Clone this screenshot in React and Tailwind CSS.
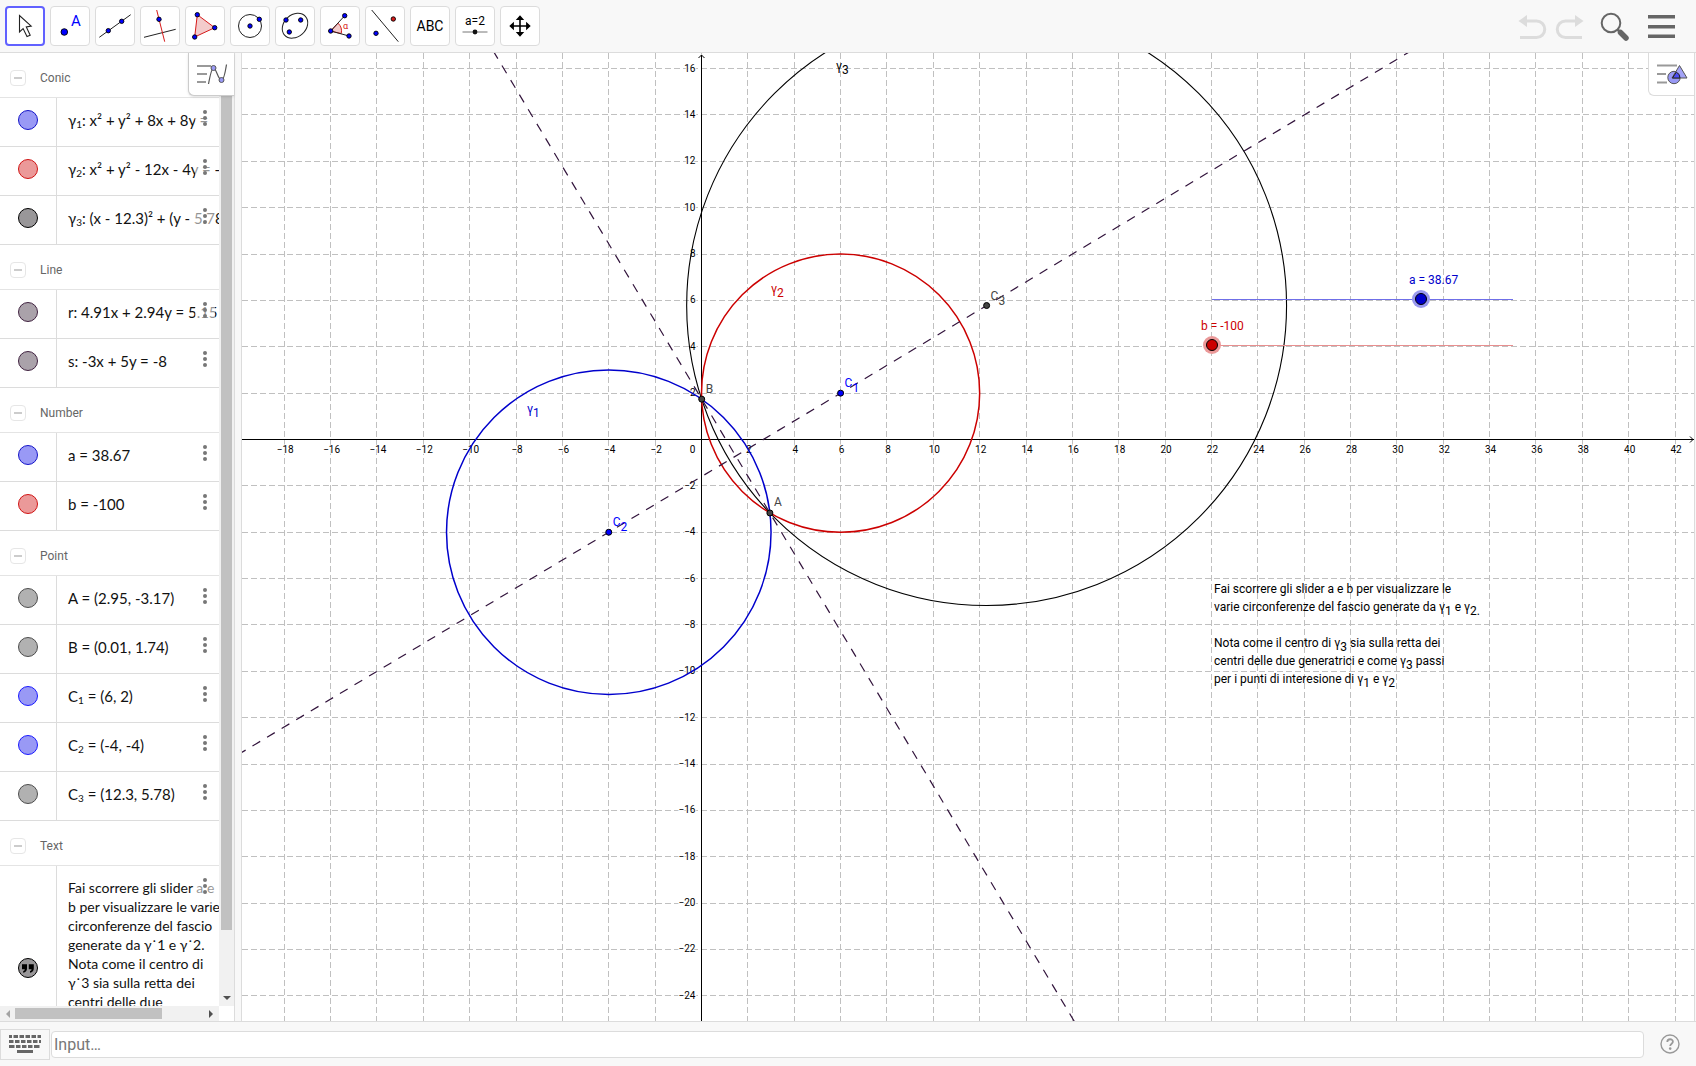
import React, { useState } from "react";

// ===== PLOT SCALE =====
const UNIT = 23.18;
const ORIGIN_X = 459.5;
const ORIGIN_Y = 386.5;

const px = (x) => ORIGIN_X + x * UNIT;
const py = (y) => ORIGIN_Y - y * UNIT;
const snap = (v) => Math.floor(v) + 0.5;

const range = (from, to, step) => {
  const out = [];
  for (let i = from; i <= to; i += step) out.push(i);
  return out;
};

const label = (n) => (n < 0 ? `−${-n}` : `${n}`);

// ===== ALGEBRA LIST =====
const BLUE = { fill: "#9999f5", stroke: "#1414c8" };
const BRIGHT = { fill: "#9999f5", stroke: "#1a1aff" };
const RED = { fill: "#eb9999", stroke: "#d01414" };
const BLACK = { fill: "#999799", stroke: "#000000" };
const PLUM = { fill: "#aaa2aa", stroke: "#412341" };
const GRAY = { fill: "#b1b1b1", stroke: "#4d4d4d" };

const groups = [
  {
    title: "Conic",
    rows: [
      { name: "γ", sub: "1", text: ": x² + y² + 8x + 8y =", color: BLUE },
      { name: "γ", sub: "2", text: ": x² + y² - 12x - 4y = -4", color: RED },
      { name: "γ", sub: "3", text: ": (x - 12.3)² + (y - 5.78)²", color: BLACK },
    ],
  },
  {
    title: "Line",
    rows: [
      { name: "r", text: ": 4.91x + 2.94y = 5.15", color: PLUM },
      { name: "s", text: ": -3x + 5y = -8", color: PLUM },
    ],
  },
  {
    title: "Number",
    rows: [
      { name: "a", text: " = 38.67", color: BLUE },
      { name: "b", text: " = -100", color: RED },
    ],
  },
  {
    title: "Point",
    rows: [
      { name: "A", text: " = (2.95, -3.17)", color: GRAY },
      { name: "B", text: " = (0.01, 1.74)", color: GRAY },
      { name: "C", sub: "1", text: " = (6, 2)", color: BRIGHT },
      { name: "C", sub: "2", text: " = (-4, -4)", color: BRIGHT },
      { name: "C", sub: "3", text: " = (12.3, 5.78)", color: GRAY },
    ],
  },
];

const noteLines = [
  "Fai scorrere gli slider a e",
  "b per visualizzare le varie",
  "circonferenze del fascio",
  "generate da γ˙1 e γ˙2.",
  "Nota come il centro di",
  "γ˙3 sia sulla retta dei",
  "centri delle due",
  "generatrici e come γ˙3",
  "passi per i punti di",
];

// ===== TOOL ICONS =====
const Dot = ({ x, y, r = 2.2, fill = "#0000ff" }) => (
  <circle cx={x} cy={y} r={r} fill={fill} stroke="#000" strokeWidth="0.9" />
);

const Icon = ({ children }) => (
  <svg viewBox="0 0 40 40" className="size-10 shrink-0" fill="none" stroke="#222" strokeWidth="1">
    {children}
  </svg>
);

const tools = [
  {
    name: "Move",
    icon: (
      <Icon>
        <path d="M14.5 9.5V26l3.6-3.4L22 30.5l3.2-1.3-3.9-8.2 4.9-.9z" fill="#fff" strokeWidth="1.1" />
      </Icon>
    ),
  },
  {
    name: "Point",
    icon: (
      <Icon>
        <Dot x={14.3} y={26} r={3.3} />
        <text x="21" y="20" fontSize="15" fill="#0000ff" stroke="none">
          A
        </text>
      </Icon>
    ),
  },
  {
    name: "Line",
    icon: (
      <Icon>
        <path d="M4.3 31.3 35.7 8.7" />
        <Dot x={13.3} y={24.7} />
        <Dot x={26.7} y={15.3} />
      </Icon>
    ),
  },
  {
    name: "Perpendicular Line",
    icon: (
      <Icon>
        <path d="M4 31.3 35.7 23.3" />
        <path d="M16.7 4 24.7 35.7" stroke="#d61a1a" />
        <Dot x={19} y={13.3} />
      </Icon>
    ),
  },
  {
    name: "Polygon",
    icon: (
      <Icon>
        <path d="M12.3 8.7 29.7 21.7 9.7 31z" fill="#f3cccc" stroke="#d61a1a" />
        <Dot x={12.3} y={8.7} />
        <Dot x={29.7} y={21.7} />
        <Dot x={9.7} y={31} />
      </Icon>
    ),
  },
  {
    name: "Circle with Center",
    icon: (
      <Icon>
        <circle cx="20" cy="20" r="11.5" />
        <Dot x={20} y={20} />
        <Dot x={29.3} y={13.3} />
      </Icon>
    ),
  },
  {
    name: "Conic",
    icon: (
      <Icon>
        <ellipse cx="20" cy="19.7" rx="14" ry="11" transform="rotate(-42 20 19.7)" />
        <Dot x={11} y={14} />
        <Dot x={25.7} y={14} />
        <Dot x={14.3} y={26} />
      </Icon>
    ),
  },
  {
    name: "Angle",
    icon: (
      <Icon>
        <path d="M10.7 25 18 17.2a10.8 10.8 0 0 1 3.2 10.4z" fill="#f3cccc" stroke="#d61a1a" />
        <path d="M24.7 9.7 10.7 25 29 30" />
        <text x="23" y="23" fontSize="9" fill="#d61a1a" stroke="none">
          α
        </text>
        <Dot x={10.7} y={25} />
        <Dot x={24.7} y={9.7} />
        <Dot x={29} y={30} />
      </Icon>
    ),
  },
  {
    name: "Reflect",
    icon: (
      <Icon>
        <path d="M6.7 4 33.3 35.7" />
        <Dot x={11} y={27.3} />
        <Dot x={28.3} y={13} fill="#d61a1a" />
      </Icon>
    ),
  },
  { name: "Text", icon: <span className="text-sm leading-none">ABC</span> },
  {
    name: "Slider",
    icon: (
      <Icon>
        <text x="20" y="19" fontSize="12" fill="#000" stroke="none" textAnchor="middle">
          a=2
        </text>
        <path d="M7.500 26H32.500" stroke="#777" />
        <circle cx="20" cy="26" r="2.4" fill="#111" stroke="none" />
      </Icon>
    ),
  },
  {
    name: "Move Graphics View",
    icon: (
      <Icon>
        <path d="M20 12V28M12 20H28" stroke="#000" strokeWidth="1.6" />
        <path
          d="M20 9.3l4.2 4.6h-8.4zM20 30.7l4.2-4.6h-8.4zM9.3 20l4.6-4.2v8.4zM30.7 20l-4.6-4.2v8.4z"
          fill="#000"
          stroke="none"
        />
      </Icon>
    ),
  },
];

const Toolbar = ({ tool, setTool }) => (
  <header className="flex h-[53px] shrink-0 items-start justify-between border-b border-[#dcdcdc] bg-[#f8f8f8] pl-[5px] pr-5">
    <div className="flex gap-[5px] pt-[6px]">
      {tools.map((t) => (
        <button
          key={t.name}
          aria-label={t.name}
          onClick={() => setTool(t.name)}
          className={
            tool === t.name
              ? "flex size-10 items-center justify-center rounded border-2 border-[#6161ff] bg-white"
              : "flex size-10 items-center justify-center rounded border border-[#dcdcdc] bg-white"
          }
        >
          {t.icon}
        </button>
      ))}
    </div>
    <div className="flex items-start gap-2 pt-3">
      <button aria-label="Undo">
        <svg width="29" height="28" viewBox="0 0 29 28" fill="none" stroke="#dcdcdc" strokeWidth="3">
          <path d="M8 9h10.500a8.200 8.200 0 0 1 0 16.500H2" />
          <path d="M0.500 9l8.500-6v12z" fill="#dcdcdc" stroke="none" />
        </svg>
      </button>
      <button aria-label="Redo">
        <svg width="29" height="28" viewBox="0 0 29 28" fill="none" stroke="#dcdcdc" strokeWidth="3">
          <path d="M21 9H10.500a8.200 8.200 0 0 0 0 16.500H27" />
          <path d="M28.500 9l-8.500-6v12z" fill="#dcdcdc" stroke="none" />
        </svg>
      </button>
      <button aria-label="Search" className="ml-2">
        <svg width="30" height="30" viewBox="0 0 30 30" fill="none" stroke="#666">
          <circle cx="11" cy="11" r="9.300" strokeWidth="2" />
          <path d="M17.500 17.500l3 3" strokeWidth="2.500" />
          <path d="M20.500 20.500l5.500 5.500" strokeWidth="5.500" strokeLinecap="round" />
        </svg>
      </button>
      <button aria-label="Menu" className="ml-[10px]">
        <svg width="28" height="30" viewBox="0 0 28 30" fill="#666">
          <path d="M0 3h27v3.500H0zM0 13h27v3.500H0zM0 22.500h27V26H0z" />
        </svg>
      </button>
    </div>
  </header>
);

const Marker = ({ color, quote }) => (
  <button aria-label="Show or hide" className="flex w-14 shrink-0 items-center justify-center">
    <svg width="22" height="22" viewBox="0 0 22 22">
      <circle cx="11" cy="11" r="9.500" fill={color.fill} stroke={color.stroke} strokeWidth="1" />
      {quote && (
        <path
          d="M5 7.200h5v4.300c0 2.200-1.300 3.800-3.800 4.300v-1.700c1-.3 1.500-.9 1.500-1.900H5zM11.800 7.200h5v4.300c0 2.200-1.300 3.800-3.800 4.300v-1.700c1-.3 1.500-.9 1.500-1.900h-2.700z"
          fill="#000"
        />
      )}
    </svg>
  </button>
);

const MoreButton = () => (
  <button
    aria-label="More"
    className="absolute right-1 top-[6px] flex h-8 w-5 items-center justify-center bg-white/55"
  >
    <svg width="4" height="16" viewBox="0 0 4 16" fill="#777" className="mb-1">
      <circle cx="2" cy="2" r="2" />
      <circle cx="2" cy="8" r="2" />
      <circle cx="2" cy="14" r="2" />
    </svg>
  </button>
);

const GroupHeader = ({ title }) => (
  <div className="flex h-[45px] items-center gap-3 border-b border-[#e4e4e4] pl-[10px] pt-[6px]">
    <button
      aria-label={`Collapse ${title}`}
      className="flex size-4 items-center justify-center rounded border border-[#e6e6e6]"
    >
      <span className="h-[2px] w-2 bg-[#cccccc]" />
    </button>
    <h2 className="pl-[2px] text-xs text-[#666666]">{title}</h2>
  </div>
);

const AlgebraView = () => (
  <aside className="relative flex w-[235px] shrink-0 flex-col border-r border-[#dcdcdc] bg-white">
    <div className="flex min-h-0 flex-1">
      <div className="min-w-0 flex-1 overflow-hidden">
        {groups.map((g) => (
          <section key={g.title}>
            <GroupHeader title={g.title} />
            {g.rows.map((r) => (
              <div key={r.name + r.sub} className="relative flex h-[49px] border-b border-[#dcdcdc]">
                <div className="flex pb-1">
                  <Marker color={r.color} />
                </div>
                <div className="flex min-w-0 flex-1 items-center overflow-hidden border-l border-[#dcdcdc] pb-1 pl-[11px] font-[Lato,'Noto_Sans',sans-serif] text-[15px] text-[#111111]">
                  <p className="whitespace-pre">
                    {r.name}
                    {r.sub && <sub className="text-[10px]">{r.sub}</sub>}
                    {r.text}
                  </p>
                </div>
                <MoreButton />
              </div>
            ))}
          </section>
        ))}
        <section>
          <GroupHeader title="Text" />
          <div className="relative flex border-b border-[#dcdcdc]">
            <Marker color={BLACK} quote />
            <p className="flex-1 whitespace-nowrap border-l border-[#dcdcdc] pb-5 pl-[11px] pt-3 font-[Lato,'Noto_Sans',sans-serif] text-[14px] leading-[19px] text-[#111111]">
              {noteLines.map((line) => (
                <span key={line} className="block">
                  {line}
                </span>
              ))}
            </p>
            <MoreButton />
          </div>
        </section>
      </div>

      {/* vertical scrollbar */}
      <div className="flex w-[15px] shrink-0 flex-col items-center bg-[#f1f1f1]">
        <div className="w-[11px] flex-[92%] bg-[#c1c1c1]" />
        <div className="flex flex-[8%] items-end pb-1">
          <svg width="8" height="8" viewBox="0 0 8 8" fill="#505050">
            <path d="M0 2h8L4 6z" />
          </svg>
        </div>
      </div>
    </div>

    {/* horizontal scrollbar */}
    <div className="mr-[15px] flex h-[15px] shrink-0 items-center bg-[#f1f1f1] px-1">
      <svg width="8" height="8" viewBox="0 0 8 8" fill="#a3a3a3">
        <path d="M6 0v8L2 4z" />
      </svg>
      <div className="ml-[3px] h-[11px] w-[147px] bg-[#c1c1c1]" />
      <svg width="8" height="8" viewBox="0 0 8 8" fill="#505050" className="ml-auto">
        <path d="M2 0v8l4-4z" />
      </svg>
    </div>

    <button
      aria-label="Algebra style bar"
      className="absolute right-0 top-0 flex h-[43px] w-[46px] items-center justify-center rounded-bl-md border-b border-l border-[#cccccc] bg-white shadow-sm"
    >
      <svg width="32" height="22" viewBox="0 0 32 22" fill="none">
        <path d="M1 3h14M1 11h10M1 19h9" stroke="#999" strokeWidth="2" />
        <path d="M12.500 21C14 13 15.500 5 17.500 5c2.800 0 4.500 12 8 12 2.500 0 4-9 5-15.500" stroke="#555" strokeWidth="1.200" />
        <circle cx="17.500" cy="5" r="2.500" fill="#9999f5" stroke="#555" />
        <circle cx="25.500" cy="17" r="2.500" fill="#9999f5" stroke="#555" />
      </svg>
    </button>
  </aside>
);

// ===== GRAPHICS VIEW =====
const xs = range(-18, 42, 2);
const ys = range(-24, 16, 2);

const points = [
  { name: "A", x: 2.95, y: -3.17, dx: 4, dy: -7, color: "#444444" },
  { name: "B", x: 0.01, y: 1.74, dx: 4, dy: -6, color: "#444444" },
  { name: "C", sub: "1", x: 6, y: 2, dx: 4, dy: -6, color: "#0000ff" },
  { name: "C", sub: "2", x: -4, y: -4, dx: 4, dy: -6, color: "#0000ff" },
  { name: "C", sub: "3", x: 12.3, y: 5.78, dx: 4, dy: -6, color: "#444444" },
];

const circles = [
  { name: "γ3", x: 12.3, y: 5.78, r: 12.94, color: "#000000", width: 1.1 },
  { name: "γ2", x: 6, y: 2, r: 6, color: "#cc0000", width: 1.5 },
  { name: "γ1", x: -4, y: -4, r: 7, color: "#0000cc", width: 1.5 },
];

const Sub = ({ children, back }) => (
  <>
    <tspan dy="4">{children}</tspan>
    {back && <tspan dy="-4">{back}</tspan>}
  </>
);

const Plot = () => {
  // radical axis through A and B
  const slope = (1.74 + 3.17) / (0.01 - 2.95);
  const rAt = (x) => 1.74 + slope * (x - 0.01);
  const sAt = (x) => (3 * x - 8) / 5;

  return (
    <svg className="block h-full w-full" fontFamily="Roboto, sans-serif" fontSize="12">
      <g stroke="#c0c0c0" strokeDasharray="6 3">
        {xs.map((x) => (
          <line key={x} x1={snap(px(x))} x2={snap(px(x))} y1="0" y2="100%" />
        ))}
        {ys.map((y) => (
          <line key={y} x1="0" x2="100%" y1={snap(py(y))} y2={snap(py(y))} />
        ))}
      </g>

      {/* axes */}
      <g stroke="#000" fill="none">
        <line x1="0" x2="100%" y1={ORIGIN_Y} y2={ORIGIN_Y} />
        <line x1={ORIGIN_X} x2={ORIGIN_X} y1="2" y2="100%" />
        <path d={`M${ORIGIN_X - 3} 5L${ORIGIN_X} 2l3 3`} />
        <svg x="100%" y={ORIGIN_Y} overflow="visible">
          <path d="M-4 -3L-1 0l-3 3" />
        </svg>
      </g>
      <g fontSize="10" fill="#000" stroke="#fff" strokeWidth="2" paintOrder="stroke">
        {xs.map((x) =>
          x === 0 ? (
            <text key={x} x={ORIGIN_X - 9} y={ORIGIN_Y + 13} textAnchor="middle">
              0
            </text>
          ) : (
            <text key={x} x={px(x) + 1} y={ORIGIN_Y + 13} textAnchor="middle">
              {label(x)}
            </text>
          )
        )}
        {ys
          .filter((y) => y !== 0)
          .map((y) => (
            <text key={y} x={ORIGIN_X - 6} y={py(y) + 3} textAnchor="end">
              {label(y)}
            </text>
          ))}
      </g>

      {circles.map((c) => (
        <circle
          key={c.name}
          cx={px(c.x)}
          cy={py(c.y)}
          r={c.r * UNIT}
          fill="none"
          stroke={c.color}
          strokeWidth={c.width}
        />
      ))}

      <g stroke="#32143c" strokeWidth="1.2" strokeDasharray="9 8">
        <line x1={px(-20)} y1={py(sAt(-20))} x2={px(50)} y2={py(sAt(50))} />
        <line x1={px(-12)} y1={py(rAt(-12))} x2={px(20)} y2={py(rAt(20))} />
      </g>

      {/* slider tracks */}
      <line x1="970" x2="1271" y1="246.5" y2="246.5" stroke="#6f6fe8" />
      <line x1="970" x2="1271" y1="292.5" y2="292.5" stroke="#e88f8f" />

      {points.map((p) => (
        <g key={p.name + p.sub}>
          <circle cx={px(p.x)} cy={py(p.y)} r="3" fill={p.color} stroke="#000" />
          <text x={px(p.x) + p.dx} y={py(p.y) + p.dy} fill={p.color}>
            {p.name}
            {p.sub && <tspan dy="5">{p.sub}</tspan>}
          </text>
        </g>
      ))}

      <text x="285" y="360" fill="#0000cc">
        γ<Sub>1</Sub>
      </text>
      <text x="529" y="240" fill="#cc0000">
        γ<Sub>2</Sub>
      </text>
      <text x="594" y="17">
        γ<Sub>3</Sub>
      </text>

      <g fill="#000">
        <text x="972" y="540">Fai scorrere gli slider a e b per visualizzare le</text>
        <text x="972" y="558">
          varie circonferenze del fascio generate da γ<Sub back=" e γ">1</Sub>
          <Sub>2.</Sub>
        </text>
        <text x="972" y="594">
          Nota come il centro di γ<Sub back=" sia sulla retta dei">3</Sub>
        </text>
        <text x="972" y="612">
          centri delle due generatrici e come γ<Sub back=" passi">3</Sub>
        </text>
        <text x="972" y="630">
          per i punti di interesione di γ<Sub back=" e γ">1</Sub>
          <Sub>2</Sub>
        </text>
      </g>
    </svg>
  );
};

const GraphicsView = () => {
  const [a, setA] = useState(38.67);
  const [b, setB] = useState(-100);

  return (
    <main className="relative min-w-0 flex-1 overflow-hidden border-x border-[#dcdcdc] bg-white">
      <Plot />

      <label htmlFor="slider-a" className="absolute left-[1167px] top-[219px] text-xs text-[#0000cc]">
        a = {a}
      </label>
      <input
        id="slider-a"
        type="range"
        min="-100"
        max="100"
        step="0.01"
        value={a}
        onChange={(e) => setA(Number(e.target.value))}
        className="absolute left-[964px] top-[237px] h-[18px] w-[313px] appearance-none bg-transparent [&::-webkit-slider-thumb]:size-3 [&::-webkit-slider-thumb]:appearance-none [&::-webkit-slider-thumb]:rounded-full [&::-webkit-slider-thumb]:border [&::-webkit-slider-thumb]:border-black [&::-webkit-slider-thumb]:bg-[#0000cc] [&::-webkit-slider-thumb]:shadow-[0_0_0_3px_#9999f0]"
      />

      <label htmlFor="slider-b" className="absolute left-[959px] top-[265px] text-xs text-[#cc0000]">
        b = {b}
      </label>
      <input
        id="slider-b"
        type="range"
        min="-100"
        max="100"
        step="0.01"
        value={b}
        onChange={(e) => setB(Number(e.target.value))}
        className="absolute left-[964px] top-[283px] h-[18px] w-[313px] appearance-none bg-transparent [&::-webkit-slider-thumb]:size-3 [&::-webkit-slider-thumb]:appearance-none [&::-webkit-slider-thumb]:rounded-full [&::-webkit-slider-thumb]:border [&::-webkit-slider-thumb]:border-black [&::-webkit-slider-thumb]:bg-[#cc0000] [&::-webkit-slider-thumb]:shadow-[0_0_0_3px_#eb9999]"
      />

      <button
        aria-label="Graphics style bar"
        className="absolute right-0 top-0 flex h-[43px] w-[46px] items-center justify-center rounded-bl-md border-b border-l border-[#dcdcdc] bg-white"
      >
        <svg width="32" height="22" viewBox="0 0 32 22" fill="none">
          <path d="M1 2.500h20M1 11h9M1 19.500h10" stroke="#999" strokeWidth="2" />
          <circle cx="18" cy="14.500" r="6.200" fill="#9999f5" stroke="#555" />
          <path d="M23.500 2.500l7.500 12.500H16z" fill="#9999f5" fillOpacity="0.9" stroke="#555" />
          <path d="M20.300 9.200A6.200 6.200 0 0 1 24 15h-7.500z" fill="#4d4df5" stroke="#222" />
        </svg>
      </button>
    </main>
  );
};

const InputBar = () => (
  <footer className="flex h-[45px] shrink-0 items-center border-t border-[#dcdcdc] bg-[#f8f8f8] pr-px">
    <button
      aria-label="Keyboard"
      className="flex h-[31px] w-[50px] items-center justify-center border border-[#dcdcdc]"
    >
      <svg width="34" height="20" viewBox="0 0 34 20" stroke="#666" strokeWidth="3">
        <path d="M1 2.500H33" strokeDasharray="3 1.500 4.500 1.500 4.500 1.500 4.500 1.500 4.500 1.500 4.500 1.500" />
        <path d="M1 7.500H33" strokeDasharray="4.500 1.500 4.500 1.500 4.500 1.500 4.500 1.500" />
        <path d="M1 12.500H33" strokeDasharray="5.500 1.500 4.500 1.500 4.500 1.500 4.500 1.500" />
        <path d="M9 17.500H25" />
      </svg>
    </button>
    <input
      type="text"
      aria-label="Input"
      placeholder="Input…"
      className="ml-px h-[27px] min-w-0 flex-1 rounded border border-[#dcdcdc] bg-white pl-[2px] text-base text-[#333333] placeholder:text-[#777777]"
    />
    <button aria-label="Help" className="flex w-[51px] items-center justify-center">
      <svg width="20" height="20" viewBox="0 0 20 20" fill="none" stroke="#999">
        <circle cx="10" cy="10" r="9" strokeWidth="1.400" />
        <path d="M7.300 8c0-3.700 5.600-3.500 5.600-.3 0 2-2.700 2-2.700 4.300" strokeWidth="1.800" />
        <circle cx="10.200" cy="14.600" r="1.300" fill="#999" stroke="none" />
      </svg>
    </button>
  </footer>
);

const App = () => {
  const [tool, setTool] = useState("Move");

  return (
    <div className="flex h-screen flex-col overflow-hidden bg-[#f8f8f8] font-[Roboto,sans-serif] text-black">
      <Toolbar tool={tool} setTool={setTool} />
      <div className="flex min-h-0 flex-1 gap-[6px] pr-px">
        <AlgebraView />
        <GraphicsView />
      </div>
      <InputBar />
    </div>
  );
};

export default App;
